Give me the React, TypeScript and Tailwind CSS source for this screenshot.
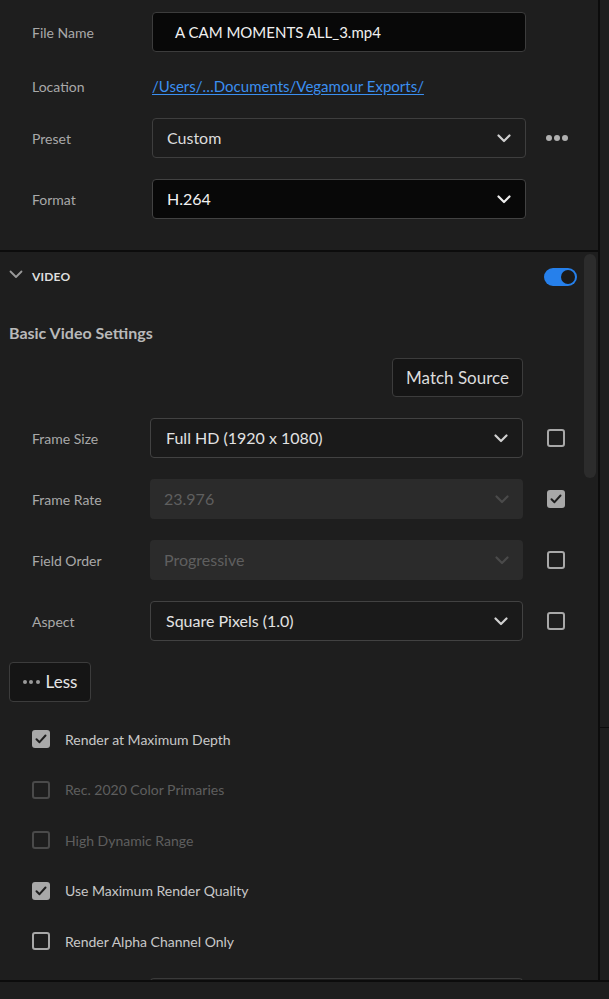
import React from "react";

const Chevron = ({ className = "", w = 2.2 }: { className?: string; w?: number }) => (
  <svg width="14" height="9" viewBox="0 0 14 9" className={className} fill="none">
    <path d="M1.5 1.5 L7 7 L12.5 1.5" stroke="currentColor" strokeWidth={w} strokeLinecap="round" strokeLinejoin="round" />
  </svg>
);

const Check = () => (
  <svg width="12" height="10" viewBox="0 0 12 10" fill="none">
    <path d="M1.5 5.2 L4.5 8.2 L10.5 1.5" stroke="#1e1e1e" strokeWidth="2" strokeLinecap="round" strokeLinejoin="round" />
  </svg>
);

const Box = ({ checked = false, disabled = false }: { checked?: boolean; disabled?: boolean }) =>
  checked ? (
    <div className="w-[18px] h-[18px] rounded-[3px] bg-[#a8a8a8] flex items-center justify-center">
      <Check />
    </div>
  ) : (
    <div
      className={
        disabled
          ? "w-[18px] h-[18px] rounded-[3px] border-2 border-[#4a4a4a]"
          : "w-[18px] h-[18px] rounded-[3px] border-2 border-[#a8a8a8]"
      }
    />
  );

const TopRow = ({ label, children, className = "" }: { label: string; children: React.ReactNode; className?: string }) => (
  <div className={"flex items-center shrink-0 " + className}>
    <div className="w-[152px] pl-[32px] text-[14px] text-[#a9a9a9]">{label}</div>
    {children}
  </div>
);

const SelectRow = ({
  label,
  value,
  disabled = false,
  checked = false,
}: {
  label: string;
  value: string;
  disabled?: boolean;
  checked?: boolean;
}) => (
  <div className="flex items-center h-[40px] shrink-0">
    <div className="w-[150px] pl-[32px] text-[14px] text-[#a9a9a9]">{label}</div>
    {disabled ? (
      <div className="w-[373px] h-[40px] rounded-[4px] bg-[#2b2b2b] flex items-center justify-between pl-[14px] pr-[14px]">
        <span className="text-[16px] text-[#5f5f5f]">{value}</span>
        <Chevron className="text-[#4a4a4a]" />
      </div>
    ) : (
      <div className="w-[373px] h-[40px] rounded-[4px] bg-[#1a1a1a] border border-[#424242] flex items-center justify-between pl-[15px] pr-[14px]">
        <span className="text-[16px] text-[#e2e2e2]">{value}</span>
        <Chevron className="text-[#d0d0d0]" />
      </div>
    )}
    <div className="ml-[24px]">
      <Box checked={checked} />
    </div>
  </div>
);

const CheckRow = ({ label, checked = false, disabled = false }: { label: string; checked?: boolean; disabled?: boolean }) => (
  <div className="flex items-center h-[50.5px] pl-[32px] shrink-0">
    <Box checked={checked} disabled={disabled} />
    <span className={"ml-[15px] text-[14px] " + (disabled ? "text-[#5e5e5e]" : "text-[#c8c8c8]")}>{label}</span>
  </div>
);

export default function App() {
  return (
    <div className="w-[609px] h-[999px] bg-[#1e1e1e] font-[Lato,sans-serif] flex flex-col overflow-hidden">
      <div className="flex h-[980px] shrink-0">
        {/* main panel */}
        <div className="w-[598px] flex flex-col">
          {/* top section */}
          <div className="h-[250px] flex flex-col shrink-0">
            <TopRow label="File Name" className="mt-[12px]">
              <div className="w-[374px] h-[40px] rounded-[4px] bg-[#080808] border border-[#3c3c3c] flex items-center pl-[22px]">
                <span className="text-[15px] text-[#f0f0f0]">A CAM MOMENTS ALL_3.mp4</span>
              </div>
            </TopRow>
            <TopRow label="Location" className="mt-[12px] h-[44px]">
              <span className="text-[15px] text-[#3b8ff0] underline underline-offset-2">/Users/…Documents/Vegamour Exports/</span>
            </TopRow>
            <TopRow label="Preset" className="mt-[10px]">
              <div className="w-[374px] h-[40px] rounded-[4px] bg-[#1c1c1c] border border-[#3e3e3e] flex items-center justify-between pl-[14px] pr-[14px]">
                <span className="text-[16px] text-[#dcdcdc]">Custom</span>
                <Chevron className="text-[#cfcfcf]" />
              </div>
              <div className="ml-[20px] flex gap-[2.5px]">
                <span className="w-[5.5px] h-[5.5px] rounded-full bg-[#b0b0b0]" />
                <span className="w-[5.5px] h-[5.5px] rounded-full bg-[#b0b0b0]" />
                <span className="w-[5.5px] h-[5.5px] rounded-full bg-[#b0b0b0]" />
              </div>
            </TopRow>
            <TopRow label="Format" className="mt-[21px]">
              <div className="w-[374px] h-[40px] rounded-[4px] bg-[#080808] border border-[#424242] flex items-center justify-between pl-[14px] pr-[14px]">
                <span className="text-[16px] text-[#f2f2f2]">H.264</span>
                <Chevron className="text-[#eeeeee]" />
              </div>
            </TopRow>
          </div>
          <div className="h-[2px] bg-[#0c0c0c] shrink-0" />
          {/* video section */}
          <div className="flex flex-1 min-h-0 overflow-hidden">
            <div className="w-[584px] flex flex-col">
              <div className="flex items-center h-[50px] pl-[9px] pr-[7px] shrink-0">
                <Chevron className="text-[#9a9a9a] -mt-[6px]" w={1.8} />
                <span className="ml-[9px] text-[12px] font-bold text-[#dedede] tracking-[0.2px]">VIDEO</span>
                <div className="ml-auto w-[33px] h-[18px] rounded-full bg-[#2680eb] flex items-center justify-end pr-[2px]">
                  <div className="w-[14px] h-[14px] rounded-full bg-[#1a1a1a]" />
                </div>
              </div>
              <div className="mt-[19px] pl-[9px] text-[16px] font-bold text-[#b9b9b9] shrink-0">Basic Video Settings</div>
              <div className="mt-[13px] flex justify-end pr-[61px] shrink-0">
                <div className="w-[131px] h-[39px] rounded-[4px] bg-[#151515] border border-[#3c3c3c] flex items-center justify-center">
                  <span className="text-[17px] text-[#dcdcdc]">Match Source</span>
                </div>
              </div>
              <div className="mt-[21px] flex flex-col gap-[21px] shrink-0">
                <SelectRow label="Frame Size" value="Full HD (1920 x 1080)" />
                <SelectRow label="Frame Rate" value="23.976" disabled checked />
                <SelectRow label="Field Order" value="Progressive" disabled />
                <SelectRow label="Aspect" value="Square Pixels (1.0)" />
              </div>
              <div className="mt-[21px] pl-[9px] shrink-0">
                <div className="w-[82px] h-[40px] rounded-[4px] bg-[#151515] border border-[#3c3c3c] flex items-center justify-center gap-[6px]">
                  <div className="flex gap-[2.5px]">
                    <span className="w-[4px] h-[4px] rounded-full bg-[#9a9a9a]" />
                    <span className="w-[4px] h-[4px] rounded-full bg-[#9a9a9a]" />
                    <span className="w-[4px] h-[4px] rounded-full bg-[#9a9a9a]" />
                  </div>
                  <span className="text-[17px] text-[#e6e6e6]">Less</span>
                </div>
              </div>
              <div className="mt-[12px] flex flex-col shrink-0">
                <CheckRow label="Render at Maximum Depth" checked />
                <CheckRow label="Rec. 2020 Color Primaries" disabled />
                <CheckRow label="High Dynamic Range" disabled />
                <CheckRow label="Use Maximum Render Quality" checked />
                <CheckRow label="Render Alpha Channel Only" />
              </div>
              <div className="mt-[11px] ml-[150px] w-[373px] h-[20px] rounded-t-[4px] border-t border-x border-[#3a3a3a] shrink-0" />
            </div>
            <div className="w-[14px] pt-[2px] pr-[2px]">
              <div className="w-[12px] h-[224px] rounded-full bg-[#2c2c2c]" />
            </div>
          </div>
        </div>
        <div className="w-[2px] bg-[#0c0c0c]" />
        <div className="flex-1 flex flex-col">
          <div className="h-[727px]" />
          <div className="h-[1px] bg-[#0c0c0c]" />
        </div>
      </div>
      <div className="h-[2px] bg-[#0c0c0c] shrink-0" />
      <div className="flex-1 bg-[#1e1e1e]" />
    </div>
  );
}
